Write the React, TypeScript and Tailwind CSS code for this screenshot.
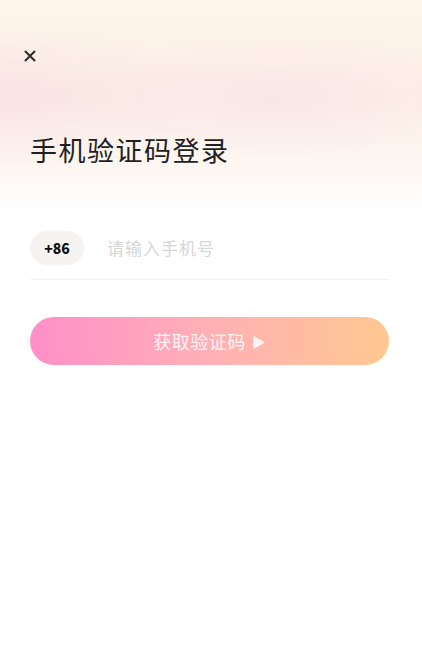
import React, { useState } from 'react';

const CloseIcon = () => (
  <svg width="14" height="14" viewBox="0 0 14 14" fill="none">
    <path d="M2.5 2.5L11.5 11.5M11.5 2.5L2.5 11.5" stroke="#2a2a2a" strokeWidth="2" strokeLinecap="round" />
  </svg>
);

export default function App() {
  const [phone, setPhone] = useState('');

  return (
    <div className="min-h-[668px] w-full bg-white font-['Noto_Sans_CJK_SC','Noto_Sans',sans-serif]">
      {/* 顶部渐变区域 */}
      <div className="h-[215px] bg-[radial-gradient(ellipse_50%_35%_at_0%_45%,rgba(247,218,226,0.6),transparent),radial-gradient(ellipse_55%_30%_at_65%_45%,rgba(247,220,230,0.55),transparent),linear-gradient(180deg,#fdf5ea_0%,#fcf1e6_45%,#fdf7f2_78%,#ffffff_100%)] px-[23px] pt-[49px]">
        <button className="flex h-[14px] w-[14px] items-center justify-center">
          <CloseIcon />
        </button>
        <h1 className="mt-[67px] pl-[7px] text-[27px] leading-[40px] tracking-[1.5px] text-[#1f1f1f]">手机验证码登录</h1>
      </div>

      <div className="pl-[30px] pr-[33px] pt-[16px]">
        <div className="flex items-center border-b border-[#f3f3f3] pb-[14px]">
          <div className="flex h-[34px] w-[54px] items-center justify-center rounded-full bg-[#f5f4f2] text-[14px] font-black text-[#111]">
            +86
          </div>
          <input
            value={phone}
            onChange={e => setPhone(e.target.value)}
            placeholder="请输入手机号"
            className="ml-[23px] flex-1 bg-transparent text-[17px] tracking-[1px] text-[#222] outline-none placeholder:text-[#d6d6d6]"
          />
        </div>

        <button className="mt-[37px] flex h-[48px] w-full items-center justify-center rounded-full bg-[linear-gradient(90deg,#ff8fc8_0%,#ffb0b6_50%,#ffc890_100%)] text-[18px] text-white/85">
          <span className="tracking-[0.5px]">获取验证码</span>
          <span className="ml-[6px] text-[14px]">▶</span>
        </button>
      </div>
    </div>
  );
}
